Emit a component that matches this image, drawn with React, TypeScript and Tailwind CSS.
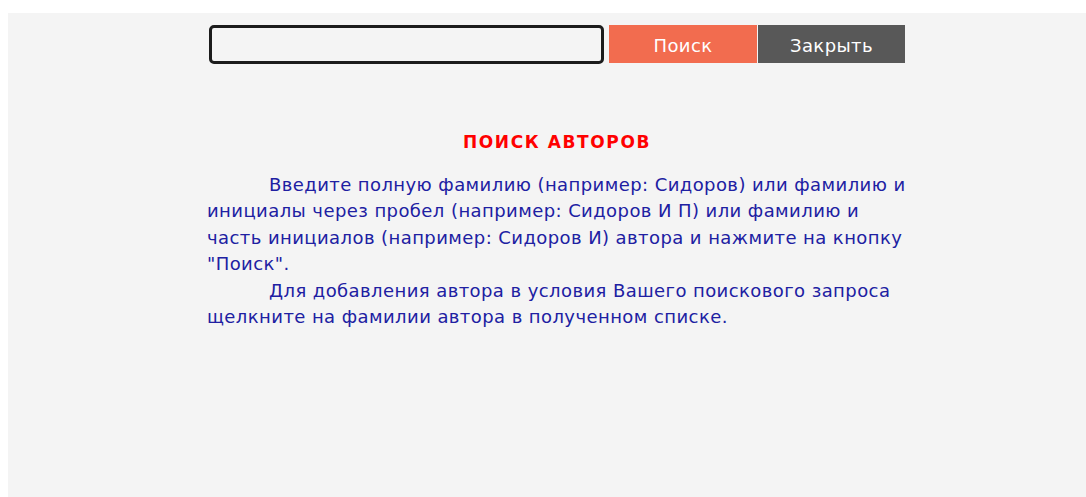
import React from "react";

const bodyFont = "[font-family:Tahoma,'DejaVu_Sans',sans-serif]";

const AuthorSearch = () => {
  return (
    <div className="min-h-[497px] bg-white pt-[13px] pl-[8px]">
      <div className="min-h-[484px] bg-[#f4f4f4]">
        <div className="ml-[201px] w-[696px] pt-[12px]">
          <form className="flex items-start" onSubmit={(e) => e.preventDefault()}>
            <input
              type="text"
              className="h-[39px] w-[395px] rounded-[5px] border-[3px] border-[#1c1c1c] bg-[#f4f4f4] px-2 outline-none"
            />
            <button
              type="submit"
              className={`ml-[5px] h-[38px] w-[148px] bg-[#f26c4f] pt-[2px] text-[18px] tracking-[0.4px] text-white ${bodyFont}`}
            >
              Поиск
            </button>
            <button
              type="button"
              className={`ml-[1px] h-[38px] w-[147px] bg-[#585858] pt-[2px] text-[18px] tracking-[0.4px] text-white ${bodyFont}`}
            >
              Закрыть
            </button>
          </form>

          <h2
            className={`mt-[66px] text-center text-[17px] font-bold tracking-[1.6px] text-[#ff0000] ${bodyFont}`}
          >
            ПОИСК АВТОРОВ
          </h2>

          <div
            className={`-ml-[2px] mt-[16px] text-[18px] leading-[26.5px] tracking-[0.42px] text-[#2020a2] ${bodyFont}`}
          >
            <p className="whitespace-nowrap">
              <span className="inline-block w-[62px]" />
              Введите полную фамилию (например: Сидоров) или фамилию и
              <br />
              инициалы через пробел (например: Сидоров И П) или фамилию и
              <br />
              часть инициалов (например: Сидоров И) автора и нажмите на кнопку
              <br />
              "Поиск".
            </p>
            <p className="whitespace-nowrap">
              <span className="inline-block w-[62px]" />
              Для добавления автора в условия Вашего поискового запроса
              <br />
              щелкните на фамилии автора в полученном списке.
            </p>
          </div>
        </div>
      </div>
    </div>
  );
};

export default function App() {
  return <AuthorSearch />;
}
